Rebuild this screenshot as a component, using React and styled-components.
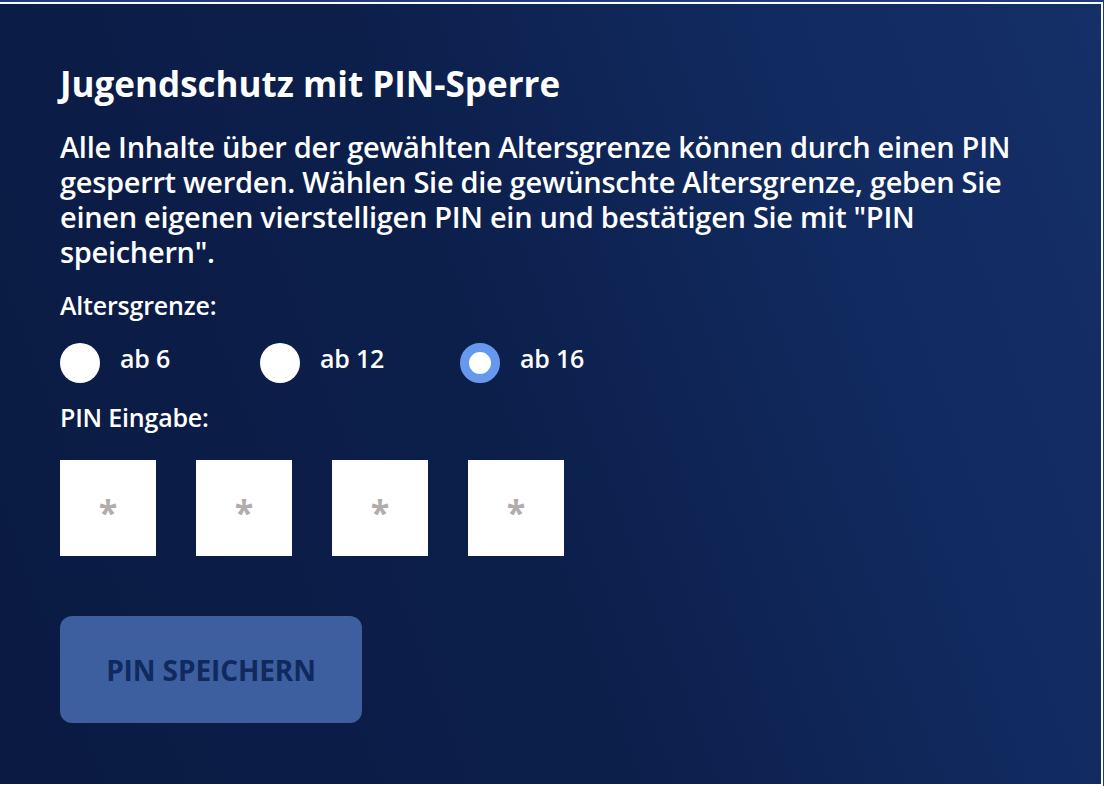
import React, { useState } from "react";
import styled, { createGlobalStyle } from "styled-components";

const GlobalStyle = createGlobalStyle`
  html, body {
    margin: 0;
    padding: 0;
    background: #1f3c7c;
  }
  body {
    font-family: "Open Sans", "Noto Sans", sans-serif;
    -webkit-font-smoothing: antialiased;
  }
`;

const Frame = styled.div`
  margin-top: 2px;
  width: 1101px;
  height: 780px;
  border-top: 2px solid #fff;
  border-right: 2px solid #fff;
  border-bottom: 2px solid #fff;
  background: linear-gradient(70deg, #0a1a42 0%, #0c1f4b 45%, #112a5f 75%, #152f68 100%);
  box-sizing: content-box;
`;

const Panel = styled.section`
  padding: 58px 60px 0 60px;
  display: flex;
  flex-direction: column;
  color: #fff;
`;

const Title = styled.h1`
  margin: 0;
  font-size: 35px;
  font-weight: 700;
  line-height: 44px;
  letter-spacing: 0;
`;

const Intro = styled.p`
  margin: 23px 0 0;
  font-size: 29px;
  line-height: 35px;
  font-weight: 600;
  max-width: 975px;
  letter-spacing: -0.3px;
`;

const Label = styled.div`
  margin-top: ${(p) => p.$top}px;
  font-size: 25px;
  line-height: 34px;
  font-weight: 600;
  letter-spacing: -0.2px;
`;

const RadioRow = styled.div`
  display: flex;
  margin-top: 21px;
`;

const RadioOption = styled.label`
  width: 200px;
  display: flex;
  align-items: center;
  gap: 20px;
  cursor: pointer;
  font-size: 25px;
  font-weight: 600;
  letter-spacing: -0.2px;
`;

const Dot = styled.span`
  width: 40px;
  height: 40px;
  border-radius: 50%;
  box-sizing: border-box;
  background: #fff;
  border: ${(p) => (p.$checked ? "9px solid #6699ee" : "none")};
  flex-shrink: 0;
`;

const OptionText = styled.span`
  margin-top: -10px;
`;

const PinRow = styled.div`
  display: flex;
  gap: 40px;
  margin-top: 26px;
`;

const PinBox = styled.div`
  width: 96px;
  height: 96px;
  background: #fff;
  display: flex;
  align-items: center;
  justify-content: center;
  color: #b2acac;
  font-size: 34px;
  font-weight: 700;
  padding-top: 8px;
  box-sizing: border-box;
`;

const SaveButton = styled.button`
  margin-top: 60px;
  width: 302px;
  height: 107px;
  border: none;
  border-radius: 12px;
  background: #3d5e9f;
  color: #10295e;
  font-family: inherit;
  font-size: 28px;
  font-weight: 700;
  letter-spacing: -0.1px;
  cursor: default;
`;

const ages = ["ab 6", "ab 12", "ab 16"];

export default function App() {
  const [age, setAge] = useState("ab 16");

  return (
    <>
      <GlobalStyle />
      <Frame>
        <Panel>
          <Title>Jugendschutz mit PIN-Sperre</Title>
          <Intro>
            Alle Inhalte über der gewählten Altersgrenze können durch einen PIN
            gesperrt werden. Wählen Sie die gewünschte Altersgrenze, geben Sie
            einen eigenen vierstelligen PIN ein und bestätigen Sie mit "PIN
            speichern".
          </Intro>
          <Label $top={19}>Altersgrenze:</Label>
          <RadioRow>
            {ages.map((a) => (
              <RadioOption key={a} onClick={() => setAge(a)}>
                <Dot $checked={age === a} />
                <OptionText>{a}</OptionText>
              </RadioOption>
            ))}
          </RadioRow>
          <Label $top={17}>PIN Eingabe:</Label>
          <PinRow>
            {[0, 1, 2, 3].map((i) => (
              <PinBox key={i}>*</PinBox>
            ))}
          </PinRow>
          <SaveButton>PIN SPEICHERN</SaveButton>
        </Panel>
      </Frame>
    </>
  );
}
